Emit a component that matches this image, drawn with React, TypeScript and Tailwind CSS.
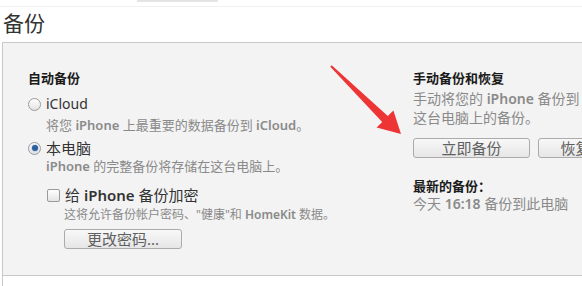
import React from 'react'

const font = "font-['Noto_Sans','Noto_Sans_CJK_SC',sans-serif]"

function Radio({ checked }: { checked?: boolean }) {
  return (
    <span className="flex h-[13px] w-[13px] shrink-0 items-center justify-center rounded-full border border-[#9a9a9a] bg-gradient-to-b from-[#ffffff] to-[#e2e2e2]">
      {checked && <span className="h-[6px] w-[6px] rounded-full bg-[#2f5f9a] shadow-[0_0_2px_#6f9ad0]" />}
    </span>
  )
}

function Btn({ label, className }: { label: string; className?: string }) {
  return (
    <div
      className={`flex h-[20px] shrink-0 items-center justify-center whitespace-nowrap rounded-[3px] border border-[#ababab] bg-gradient-to-b from-[#f8f8f8] to-[#e6e6e6] text-[15px] leading-none text-[#606060] ${className ?? ''}`}
    >
      {label}
    </div>
  )
}

export default function App() {
  return (
    <div className={`relative h-[286px] w-[582px] overflow-hidden bg-white ${font}`}>
      {/* top strip */}
      <div className="relative h-[6px]">
        <div className="absolute left-[137px] top-0 h-[2px] w-[81px] bg-[#e4e4e4]" />
      </div>
      <div className="h-px bg-[#f0f0f0]" />
      <div className="h-[35px] pl-[3px] pt-[2px] text-[21px] leading-[28px] text-[#333]">备份</div>

      {/* panel */}
      <div className="ml-[2px] h-[244px] border-l border-[#c8c8c8]">
        <div className="flex h-[234px] border-y border-[#c8c8c8] bg-[#f3f3f3]">
          {/* left column */}
          <div className="w-[410px] shrink-0 pl-[25px] pt-[26px]">
            <div className="text-[13px] font-bold leading-[18px] text-[#1a1a1a]">自动备份</div>

            <div className="mt-[8px] flex items-center gap-[5px] text-[14px] leading-[18px] text-[#333]">
              <Radio />
              <span>iCloud</span>
            </div>
            <div className="mt-[4px] pl-[18px] text-[13px] leading-[16px] text-[#8a8a8a]">
              将您 <span className="font-semibold">iPhone</span> 上最重要的数据备份到{' '}
              <span className="font-semibold">iCloud</span>。
            </div>

            <div className="mt-[6px] flex items-center gap-[5px] text-[15px] leading-[18px] text-[#333]">
              <Radio checked />
              <span>本电脑</span>
            </div>
            <div className="mt-px pl-[18px] text-[13px] leading-[16px] text-[#8a8a8a]">
              <span className="font-semibold">iPhone</span> 的完整备份将存储在这台电脑上。
            </div>

            <div className="mt-[12px] flex items-center gap-[5px] pl-[19px] text-[15px] leading-[18px] text-[#333]">
              <span className="h-[13px] w-[13px] shrink-0 rounded-[2px] border border-[#9a9a9a] bg-gradient-to-b from-[#ffffff] to-[#e4e4e4]" />
              <span>
                给 <span className="font-semibold">iPhone</span> 备份加密
              </span>
            </div>
            <div className="mt-[3px] pl-[36px] text-[12px] leading-[16px] text-[#8a8a8a]">
              这将允许备份帐户密码、"健康"和 <span className="font-semibold">HomeKit</span> 数据。
            </div>

            <div className="mt-[6px] pl-[36px]">
              <Btn label="更改密码..." className="w-[118px]" />
            </div>
          </div>

          {/* right column */}
          <div className="flex-1 whitespace-nowrap pt-[26px]">
            <div className="text-[13px] font-bold leading-[18px] text-[#1a1a1a]">手动备份和恢复</div>
            <div className="mt-[2px] text-[14px] leading-[19px] text-[#8a8a8a]">
              手动将您的 <span className="font-semibold">iPhone</span> 备份到
              <br />
              这台电脑上的备份。
            </div>
            <div className="mt-[11px] flex gap-[8px]">
              <Btn label="立即备份" className="w-[117px]" />
              <Btn label="恢复备份..." className="w-[117px]" />
            </div>
            <div className="mt-[19px] text-[13px] font-bold leading-[18px] text-[#1a1a1a]">最新的备份：</div>
            <div className="text-[14px] leading-[17px] text-[#8a8a8a]">
              今天 <span className="font-semibold">16:18</span> 备份到此电脑
            </div>
          </div>
        </div>
      </div>

      {/* red annotation arrow */}
      <svg className="pointer-events-none absolute left-0 top-0" width="582" height="286">
        <polygon
          points="330.3,66.7 382.2,121.9 376.6,127.6 401,134 393.4,110.4 387.8,116.1 331.7,65.3"
          fill="#ee3535"
        />
      </svg>
    </div>
  )
}
